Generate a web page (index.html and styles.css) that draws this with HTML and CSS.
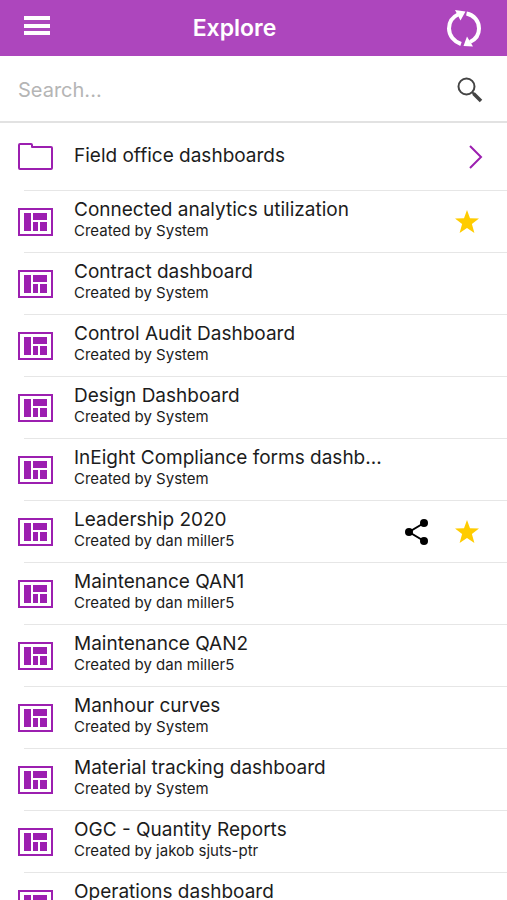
FILE: index.html
```html
<!DOCTYPE html>
<html lang="en">
<head>
<meta charset="utf-8">
<meta name="viewport" content="width=device-width, initial-scale=1">
<title>Explore</title>
<link rel="stylesheet" href="styles.css">
</head>
<body>
<svg class="sprite" aria-hidden="true">
  <symbol id="dash" viewBox="0 0 36 30">
    <rect x="1" y="2" width="33" height="26" fill="none" stroke="currentColor" stroke-width="2"/>
    <path fill="currentColor" d="M6 6h7v18H6zM15 6h14v7H15zM15 15h5v9h-5zM22 15h7v9h-7z"/>
  </symbol>
  <symbol id="star" viewBox="0 0 26 26">
    <path fill="currentColor" d="M13 1l3 8.300 9 .300-7.100 5.500 2.500 8.900L13 19l-7.400 5 2.500-8.900L1 9.600l9-.300z"/>
  </symbol>
</svg>
<div class="app">
  <header class="bar">
    <button class="icon-button" type="button" aria-label="Menu">
      <svg class="menu-icon" viewBox="0 0 26 24"><path fill="currentColor" d="M0 0h26v4H0zM0 8h26v4H0zM0 15h26v4H0z"/></svg>
    </button>
    <h1>Explore</h1>
    <button class="icon-button" type="button" aria-label="Refresh">
      <svg class="refresh-icon" viewBox="0 0 36 38">
        <path fill="none" stroke="currentColor" stroke-width="4" d="M14 35C7 32.500 2 26.500 2 19.500C2 13 5.500 8 11 5.500M19.500 4.500C27 6 32 12 32 19.500C32 25.500 28.500 30.500 23 33"/>
        <path fill="currentColor" d="M8 1l10.500 1.500-5 9zM26 37.500l-9.500-.500 3.500-9.500z"/>
      </svg>
    </button>
  </header>
  <form class="search" role="search">
    <input type="text" placeholder="Search..." aria-label="Search">
    <button class="icon-button" type="submit" aria-label="Search">
      <svg class="search-icon" viewBox="0 0 26 26"><circle cx="9.500" cy="9.500" r="8" fill="none" stroke="currentColor" stroke-width="2"/><path d="M15 15l2.500 2.500" stroke="currentColor" stroke-width="2"/><path d="M16.500 16.500l7.500 7.500" stroke="currentColor" stroke-width="3.500"/></svg>
    </button>
  </form>
  <ul class="list">
    <li><div class="row folder"><a href="#"><svg class="item-icon" viewBox="0 0 36 30"><path fill="none" stroke="currentColor" stroke-width="2" stroke-linejoin="round" d="M2 2h11q1 0 1 1v2h19q1 0 1 1v20q0 1-1 1H2q-1 0-1-1V3q0-1 1-1z"/></svg><span class="text"><span class="title">Field office dashboards</span></span></a><svg class="chevron" viewBox="0 0 14 26" aria-hidden="true"><path fill="none" stroke="currentColor" stroke-width="2" d="M1 2l11 11L1 24"/></svg></div></li>
    <li><div class="row"><a href="#"><svg class="item-icon"><use href="#dash"/></svg><span class="text"><span class="title">Connected analytics utilization</span><span class="author">Created by System</span></span></a><button class="icon-button star" type="button" aria-label="Favorite"><svg><use href="#star"/></svg></button></div></li>
    <li><div class="row"><a href="#"><svg class="item-icon"><use href="#dash"/></svg><span class="text"><span class="title">Contract dashboard</span><span class="author">Created by System</span></span></a></div></li>
    <li><div class="row"><a href="#"><svg class="item-icon"><use href="#dash"/></svg><span class="text"><span class="title">Control Audit Dashboard</span><span class="author">Created by System</span></span></a></div></li>
    <li><div class="row"><a href="#"><svg class="item-icon"><use href="#dash"/></svg><span class="text"><span class="title">Design Dashboard</span><span class="author">Created by System</span></span></a></div></li>
    <li><div class="row"><a href="#"><svg class="item-icon"><use href="#dash"/></svg><span class="text"><span class="title">InEight Compliance forms dashb...</span><span class="author">Created by System</span></span></a></div></li>
    <li><div class="row"><a href="#"><svg class="item-icon"><use href="#dash"/></svg><span class="text"><span class="title">Leadership 2020</span><span class="author">Created by dan miller5</span></span></a><button class="icon-button share" type="button" aria-label="Share"><svg viewBox="0 0 26 26"><path fill="none" stroke="currentColor" stroke-width="2" d="M20 4L5 13l15 9"/><g fill="currentColor"><circle cx="20" cy="4" r="4"/><circle cx="5" cy="13" r="4"/><circle cx="20" cy="22" r="4"/></g></svg></button><button class="icon-button star" type="button" aria-label="Favorite"><svg><use href="#star"/></svg></button></div></li>
    <li><div class="row"><a href="#"><svg class="item-icon"><use href="#dash"/></svg><span class="text"><span class="title">Maintenance QAN1</span><span class="author">Created by dan miller5</span></span></a></div></li>
    <li><div class="row"><a href="#"><svg class="item-icon"><use href="#dash"/></svg><span class="text"><span class="title">Maintenance QAN2</span><span class="author">Created by dan miller5</span></span></a></div></li>
    <li><div class="row"><a href="#"><svg class="item-icon"><use href="#dash"/></svg><span class="text"><span class="title">Manhour curves</span><span class="author">Created by System</span></span></a></div></li>
    <li><div class="row"><a href="#"><svg class="item-icon"><use href="#dash"/></svg><span class="text"><span class="title">Material tracking dashboard</span><span class="author">Created by System</span></span></a></div></li>
    <li><div class="row"><a href="#"><svg class="item-icon"><use href="#dash"/></svg><span class="text"><span class="title">OGC - Quantity Reports</span><span class="author">Created by jakob sjuts-ptr</span></span></a></div></li>
    <li><div class="row"><a href="#"><svg class="item-icon"><use href="#dash"/></svg><span class="text"><span class="title">Operations dashboard</span><span class="author">Created by System</span></span></a></div></li>
  </ul>
</div>
</body>
</html>
```
FILE: styles.css
```css
* {
  box-sizing: border-box;
}

body {
  margin: 0;
  background: #fff;
  color: #1c1c1c;
  font-family: Inter, "Liberation Sans", sans-serif;
}

.sprite {
  display: none;
}

.app {
  display: flex;
  flex-direction: column;
  height: 100vh;
}

.icon-button {
  display: flex;
  flex: none;
  padding: 0;
  border: 0;
  background: none;
  color: inherit;
}

.bar {
  display: grid;
  grid-template-columns: 60px 1fr 60px;
  flex: none;
  align-items: center;
  height: 56px;
  padding: 0 24px;
  background: #ad46bd;
  color: #fff;
}

.bar .icon-button:last-child {
  justify-self: end;
}

.bar h1 {
  margin: 0;
  padding-right: 38px;
  font-size: 23px;
  font-weight: 600;
  line-height: 28px;
  text-align: center;
}

.menu-icon {
  width: 26px;
  height: 24px;
}

.refresh-icon {
  width: 36px;
  height: 38px;
}

.search {
  display: flex;
  flex: none;
  align-items: center;
  height: 67px;
  padding: 2px 24px 0 18px;
  border-bottom: 2px solid #e2e2e2;
}

.search input {
  flex: 1;
  min-width: 0;
  height: 40px;
  padding: 0;
  border: 0;
  outline: 0;
  color: inherit;
  font: inherit;
  font-size: 20px;
}

.search input::placeholder {
  color: #b5b5b5;
  opacity: 1;
}

.search-icon {
  width: 26px;
  height: 26px;
  color: #444;
}

.list {
  flex: 1;
  min-height: 0;
  margin: 0;
  padding: 0;
  overflow-y: auto;
  list-style: none;
  scrollbar-width: none;
}

.list li::after {
  display: block;
  height: 1px;
  margin-left: 24px;
  background: #e6e6e6;
  content: "";
}

.row {
  display: flex;
  gap: 24px;
  align-items: center;
  height: 61px;
  padding: 0 27px 0 18px;
}

.folder {
  height: 67px;
  padding-right: 24px;
}

.row a {
  display: flex;
  flex: 1;
  gap: 20px;
  align-items: center;
  min-width: 0;
  color: inherit;
  text-decoration: none;
}

.item-icon {
  flex: none;
  width: 36px;
  height: 30px;
  color: #9c1fb0;
}

.text {
  display: flex;
  flex-direction: column;
  min-width: 0;
  padding-bottom: 6px;
}

.folder .text {
  padding-bottom: 1px;
}

.title {
  overflow: hidden;
  font-size: 19px;
  line-height: 24px;
  text-overflow: ellipsis;
  white-space: nowrap;
}

.author {
  font-size: 15px;
  line-height: 18px;
}

.chevron {
  flex: none;
  width: 14px;
  height: 26px;
  color: #9c1fb0;
}

.row .icon-button svg {
  width: 26px;
  height: 26px;
}

.star {
  color: #fc0;
}

.share {
  color: #000;
}
```
